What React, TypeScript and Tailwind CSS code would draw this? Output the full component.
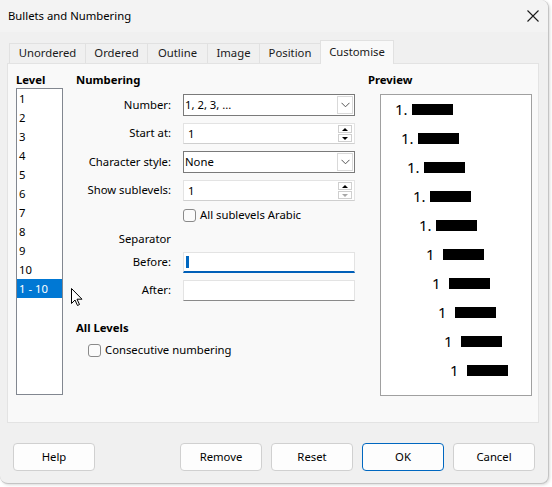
import React from "react";

const tabs = [
  { name: "Unordered", w: "w-[76px]" },
  { name: "Ordered", w: "w-[62px]" },
  { name: "Outline", w: "w-[60px]" },
  { name: "Image", w: "w-[52px]" },
  { name: "Position", w: "w-[61px]" },
  { name: "Customise", w: "w-[74px]" },
];
const levels = ["1", "2", "3", "4", "5", "6", "7", "8", "9", "10", "1 - 10"];

function Chevron() {
  return (
    <svg width="9" height="6" viewBox="0 0 9 6" fill="none">
      <path d="M0.5 0.8 L4.5 4.8 L8.5 0.8" stroke="#555" strokeWidth="1" />
    </svg>
  );
}

function Dropdown({ value }: { value: string }) {
  return (
    <div className="flex h-[22px] w-[172px] border border-[#7a7a7a] bg-white">
      <div className="flex-1 pl-[1px] leading-[20px]">{value}</div>
      <div className="m-[1px] flex w-[16px] items-center justify-center border border-[#d9d9d9] bg-white">
        <Chevron />
      </div>
    </div>
  );
}

function Spin({ value, downDisabled }: { value: string; downDisabled?: boolean }) {
  return (
    <div className="flex h-[21px] w-[172px] border border-[#e3e3e3] border-b-[#cfcfcf] bg-white">
      <div className="flex-1 pl-[4px] leading-[19px]">{value}</div>
      <div className="mr-[2px] flex w-[14px] flex-col justify-center gap-[1px]">
        <div className="flex h-[8px] items-center justify-center border border-[#cfcfcf]">
          <div className="h-0 w-0 border-x-[3px] border-b-[3px] border-x-transparent border-b-black" />
        </div>
        <div className="flex h-[8px] items-center justify-center border border-[#cfcfcf]">
          <div
            className={
              downDisabled
                ? "h-0 w-0 border-x-[3px] border-t-[3px] border-x-transparent border-t-[#a8a8a8]"
                : "h-0 w-0 border-x-[3px] border-t-[3px] border-x-transparent border-t-black"
            }
          />
        </div>
      </div>
    </div>
  );
}

function Checkbox({ label }: { label: string }) {
  return (
    <div className="flex h-[16px] items-center gap-[4px]">
      <div className="h-[13px] w-[13px] rounded-[3px] border border-[#8a8a8a] bg-[#fbfbfb]" />
      <span>{label}</span>
    </div>
  );
}

function Row({ label, children }: { label: string; children: React.ReactNode }) {
  return (
    <div className="flex items-center">
      <div className="w-[95px] text-right">{label}</div>
      <div className="ml-[12px]">{children}</div>
    </div>
  );
}

export default function App() {
  return (
    <div className="h-[487px] w-[552px] bg-white font-['Noto_Sans',sans-serif] text-[11.3px] text-black">
      <div className="relative flex h-[484px] w-[549px] flex-col rounded-b-lg rounded-tr-lg border-b border-r border-[#c4c4c4] bg-[#f0f0f0] shadow-[1px_1px_3px_rgba(0,0,0,0.15)]">
        {/* Title bar */}
        <div className="flex h-[32px] items-center justify-between rounded-tr-lg bg-[#f3f3f3] pl-[8px] pr-[9px]">
          <span>Bullets and Numbering</span>
          <svg width="12" height="12" viewBox="0 0 12 12">
            <path d="M0.5 0.5 L11.5 11.5 M11.5 0.5 L0.5 11.5" stroke="#1a1a1a" strokeWidth="1.1" />
          </svg>
        </div>

        {/* Tabs */}
        <div className="mt-[8px] flex h-[23px] items-end pl-[9px]">
          {tabs.map((t) => (
            <div
              key={t.name}
              className={
                t.name === "Customise"
                  ? `relative -mb-[1px] flex h-[24px] items-center justify-center border border-b-0 border-[#e1e1e1] bg-[#f9f9f9] text-[#1a1a1a] ${t.w}`
                  : `flex h-[20px] items-center justify-center border border-b-0 border-r-0 border-[#e1e1e1] bg-[#f0f0f0] text-[#1a1a1a] ${t.w}`
              }
            >
              {t.name}
            </div>
          ))}
        </div>

        {/* Panel */}
        <div className="ml-[7px] flex h-[360px] w-[532px] border border-[#e3e3e3] bg-[#f9f9f9] pt-[8px]">
          {/* Level */}
          <div className="ml-[8px] flex w-[47px] flex-col">
            <div className="font-bold leading-[16px]">Level</div>
            <div className="relative h-[307px] border border-[#828790] bg-white">
              {levels.map((l) => (
                <div
                  key={l}
                  className={
                    l === "1 - 10"
                      ? "h-[19px] bg-[#0078d4] pl-[2px] leading-[19px] text-white"
                      : "h-[19px] pl-[2px] leading-[19px]"
                  }
                >
                  {l}
                </div>
              ))}
            </div>
          </div>

          {/* Numbering */}
          <div className="ml-[13px] flex w-[279px] flex-col">
            <div className="font-bold leading-[16px]">Numbering</div>
            <div className="mt-[6px] flex flex-col gap-[7px]">
              <Row label="Number:">
                <Dropdown value="1, 2, 3, ..." />
              </Row>
              <Row label="Start at:">
                <Spin value="1" />
              </Row>
              <Row label="Character style:">
                <Dropdown value="None" />
              </Row>
              <Row label="Show sublevels:">
                <Spin value="1" downDisabled />
              </Row>
            </div>
            <div className="ml-[107px] mt-[6px]">
              <Checkbox label="All sublevels Arabic" />
            </div>
            <div className="mt-[8px] w-[95px] text-right leading-[16px]">Separator</div>
            <div className="mt-[5px] flex flex-col gap-[7px]">
              <Row label="Before:">
                <div className="flex h-[21px] w-[172px] items-center border border-[#e3e3e3] border-b-2 border-b-[#005fb8] bg-white pl-[2px]">
                  <div className="h-[12px] w-[3px] bg-[#0067c0]" />
                </div>
              </Row>
              <Row label="After:">
                <div className="h-[21px] w-[172px] border border-[#e3e3e3] border-b-[#8a8a8a] bg-white" />
              </Row>
            </div>
            <div className="mt-[19px] font-bold leading-[16px]">All Levels</div>
            <div className="ml-[12px] mt-[6px]">
              <Checkbox label="Consecutive numbering" />
            </div>
          </div>

          {/* Preview */}
          <div className="ml-[13px] flex flex-col">
            <div className="font-bold leading-[16px]">Preview</div>
            <div className="ml-[12px] mt-[6px] h-[302px] w-[152px] border border-[#a0a0a0] bg-white">
              {Array.from({ length: 10 }).map((_, i) => (
                <div
                  key={i}
                  className="flex h-[29px] items-center text-[15px]"
                  style={{ paddingLeft: 14 + i * 6 + (i >= 5 ? 1 : 0) }}
                >
                  <span className="w-[17px] leading-none">{i < 5 ? "1." : "1"}</span>
                  <div className="h-[11px] w-[41px] bg-black" />
                </div>
              ))}
            </div>
          </div>
        </div>

        {/* Buttons */}
        <div className="mt-[20px] flex px-[13px]">
          <button className="h-[28px] w-[82px] rounded-[4px] border border-[#d0d0d0] bg-[#fdfdfd]">Help</button>
          <div className="ml-auto flex gap-[9px]">
            <button className="h-[28px] w-[82px] rounded-[4px] border border-[#d0d0d0] bg-[#fdfdfd]">Remove</button>
            <button className="h-[28px] w-[82px] rounded-[4px] border border-[#d0d0d0] bg-[#fdfdfd]">Reset</button>
            <button className="h-[28px] w-[82px] rounded-[4px] border border-[#0067c0] bg-[#fdfdfd]">OK</button>
            <button className="h-[28px] w-[82px] rounded-[4px] border border-[#d0d0d0] bg-[#fdfdfd]">Cancel</button>
          </div>
        </div>

        {/* Mouse cursor */}
        <svg className="absolute left-[71px] top-[288px]" width="12" height="19" viewBox="0 0 12 19">
          <path d="M0.5 0.5 L0.5 15.5 L4 12 L6.5 17.5 L8.5 16.5 L6 11.2 L11 11.2 Z" fill="white" stroke="black" strokeWidth="1" />
        </svg>
      </div>
    </div>
  );
}
